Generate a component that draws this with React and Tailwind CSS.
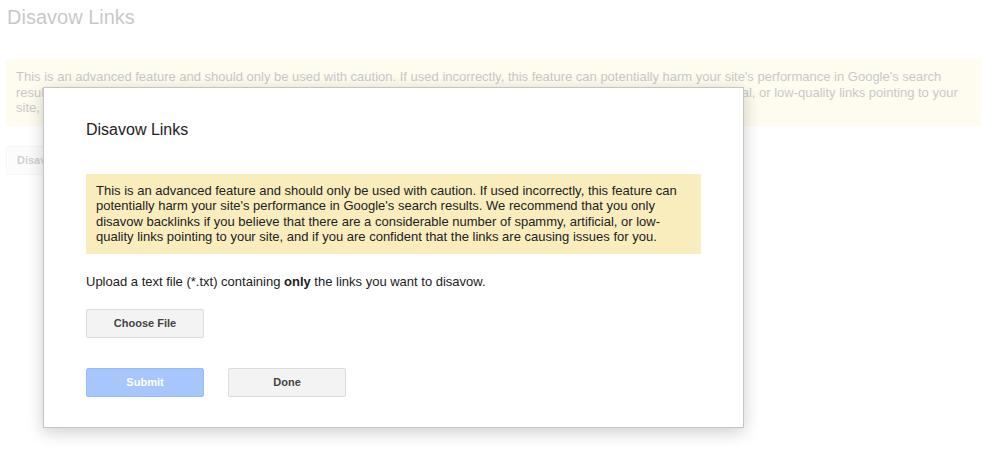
import React from 'react';

const warning =
  "This is an advanced feature and should only be used with caution. If used incorrectly, this feature can potentially harm your site's performance in Google's search results. We recommend that you only disavow backlinks if you believe that there are a considerable number of spammy, artificial, or low-quality links pointing to your site, and if you are confident that the links are causing issues for you.";

function GrayButton({ children, className = '' }) {
  return (
    <button
      className={`h-[29px] w-[118px] rounded-[2px] border border-[#dcdcdc] bg-[#f3f3f3] text-[11px] font-bold text-[#444] ${className}`}
    >
      {children}
    </button>
  );
}

export default function App() {
  return (
    <div
      className="relative h-[452px] w-full overflow-hidden bg-white text-[#222]"
      style={{ fontFamily: '"Liberation Sans", Arial, sans-serif' }}
    >
      {/* page behind the dialog */}
      <div className="pt-[5px]">
        <h1 className="ml-[7px] text-[20px] leading-[24px]">Disavow Links</h1>
        <div className="mt-[30px] ml-[6px] mr-[10px] bg-[#f9edbe] px-[10px] py-[10px] text-[13px] leading-[15.5px]">
          {warning}
        </div>
        <div className="mt-[20px] ml-[6px]">
          <GrayButton className="h-[28px] w-[120px] text-left pl-[10px]">Disavow links</GrayButton>
        </div>
      </div>

      {/* overlay */}
      <div className="absolute inset-0 bg-white/75" />

      {/* dialog */}
      <div className="absolute left-[43px] top-[87px] w-[701px] border border-[#c4c4c4] bg-white px-[42px] pt-[30px] pb-[30px] shadow-[0_4px_16px_rgba(0,0,0,0.2)]">
        <h2 className="text-[16px] leading-[24px]">Disavow Links</h2>
        <div className="mt-[32px] bg-[#f9edbe] px-[10px] py-[9px] text-[13px] leading-[15.4px]">
          {warning}
        </div>
        <p className="mt-[20px] text-[13px] leading-[16px]">
          Upload a text file (*.txt) containing <b>only</b> the links you want to disavow.
        </p>
        <GrayButton className="mt-[19px] block">Choose File</GrayButton>
        <div className="mt-[30px] flex gap-[24px]">
          <button className="h-[29px] w-[118px] rounded-[2px] border border-[#98bcf6] bg-[#a6c6fc] text-[11px] font-bold text-white">
            Submit
          </button>
          <GrayButton>Done</GrayButton>
        </div>
      </div>
    </div>
  );
}
